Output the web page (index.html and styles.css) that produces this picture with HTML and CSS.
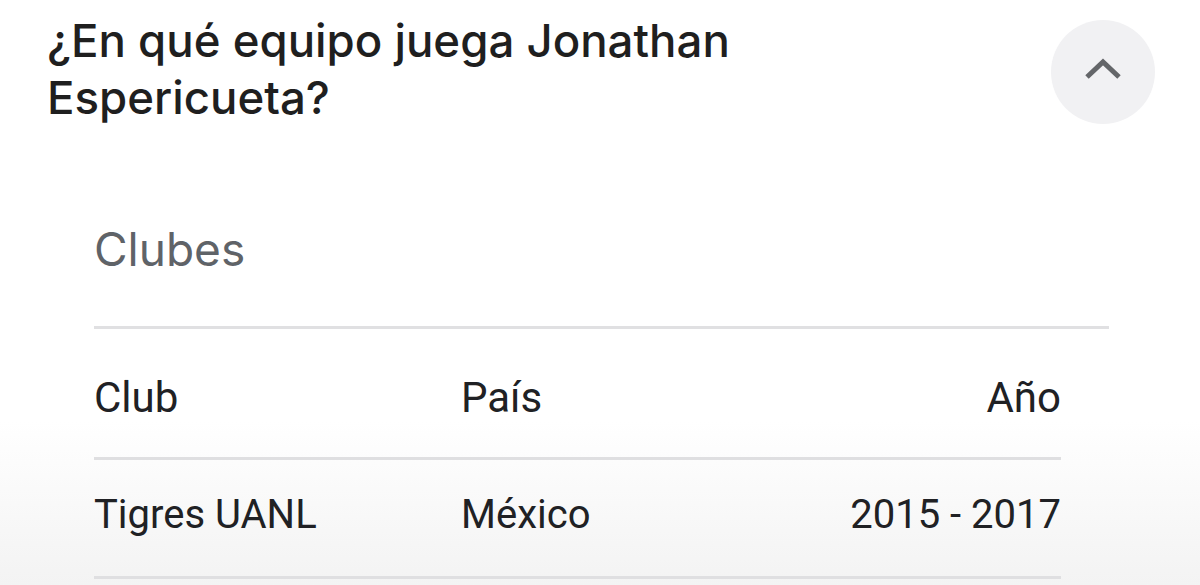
FILE: index.html
```html
<!DOCTYPE html>
<html lang="es">
<head>
<meta charset="utf-8">
<title>Clubes</title>
<link rel="stylesheet" href="styles.css">
</head>
<body>
<div class="page">
  <div class="question">
    <h1 class="q-title">¿En qué equipo juega Jonathan Espericueta?</h1>
    <div class="toggle">
      <svg width="38" height="24" viewBox="0 0 38 24"><polyline points="3,20 19,5 35,20" fill="none" stroke="#646669" stroke-width="5" stroke-linejoin="miter"/></svg>
    </div>
  </div>
  <div class="card">
    <div class="card-title">Clubes</div>
    <div class="table">
      <div class="row head">
        <div class="c-club">Club</div>
        <div class="c-pais">País</div>
        <div class="c-anio">Año</div>
      </div>
      <div class="row body">
        <div class="c-club">Tigres UANL</div>
        <div class="c-pais">México</div>
        <div class="c-anio">2015 - 2017</div>
      </div>
    </div>
  </div>
</div>
</body>
</html>
```

FILE: styles.css
```css
html, body {
  margin: 0;
  padding: 0;
  background: #ffffff;
}
body {
  font-family: Roboto, "Liberation Sans", sans-serif;
  color: #202124;
  width: 1200px;
  height: 585px;
  overflow: hidden;
  background: linear-gradient(#ffffff 0%, #ffffff 72%, #f3f3f3 100%);
}
.page {
  padding: 12px 45px 0 47px;
}
.question {
  display: flex;
  justify-content: space-between;
  align-items: flex-start;
}
.q-title {
  margin: 0;
  font-family: Inter, Roboto, sans-serif;
  font-weight: 500;
  font-size: 45.6px;
  line-height: 57px;
  width: 760px;
  color: #1f1f1f;
}
.toggle {
  margin-top: 8px;
  width: 104px;
  height: 104px;
  border-radius: 50%;
  background: #f1f1f3;
  display: flex;
  align-items: center;
  justify-content: center;
}
.toggle svg {
  margin-top: -6px;
}
.card {
  padding: 96px 46px 0 47px;
}
.card-title {
  font-family: Inter, Roboto, sans-serif;
  font-size: 46px;
  line-height: 54px;
  color: #5f6368;
  padding-bottom: 50px;
  border-bottom: 3px solid #e0e0e2;
}
.table {
  width: 967px;
}
.row {
  display: flex;
  align-items: flex-start;
  border-bottom: 3px solid #dfdfe1;
  line-height: 48px;
  color: #202124;
}
.row.head {
  font-size: 42px;
  padding: 45px 0 35px;
}
.row.body {
  font-size: 40px;
  padding: 31px 0 37px;
}
.c-club {
  width: 367px;
}
.c-pais {
  flex: 1;
}
.c-anio {
  text-align: right;
}
```
